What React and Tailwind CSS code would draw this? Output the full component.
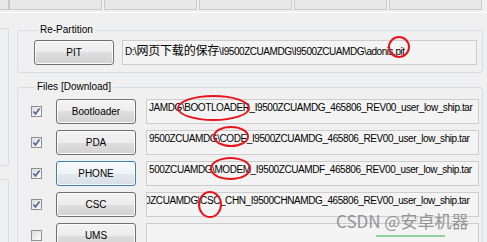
import React from 'react';

const FONT = "font-['Liberation_Sans','Noto_Sans_CJK_SC',sans-serif]";

const files = [
  { name: 'Bootloader', checked: true, path: 'JAMDG\\BOOTLOADER_I9500ZCUAMDG_465806_REV00_user_low_ship.tar' },
  { name: 'PDA', checked: true, path: '9500ZCUAMDG\\CODE_I9500ZCUAMDG_465806_REV00_user_low_ship.tar' },
  { name: 'PHONE', checked: true, focused: true, path: '500ZCUAMDG\\MODEM_I9500ZCUAMDF_465806_REV00_user_low_ship.tar' },
  { name: 'CSC', checked: true, path: '0ZCUAMDG\\CSC_CHN_I9500CHNAMDG_465806_REV00_user_low_ship.tar', shift: true },
  { name: 'UMS', checked: false, path: '' },
];

// red marker ellipses drawn over the screenshot
const marks = [
  { left: 388, top: 36, w: 22, h: 22 },
  { left: 177, top: 95, w: 73, h: 26 },
  { left: 213, top: 126, w: 36, h: 21 },
  { left: 210, top: 157, w: 41, h: 23 },
  { left: 198, top: 191, w: 24, h: 27 },
];

const Button = ({ label, focused }) => (
  <div
    className={`w-[80px] h-[25px] shrink-0 flex items-center justify-center rounded-[3px] border text-[10px] ${
      focused
        ? 'border-[#3c7fb1] bg-[linear-gradient(to_bottom,#f7fafc_0%,#eef3f6_50%,#e2e9ee_50%,#d7e0e7_100%)]'
        : 'border-[#707070] bg-[linear-gradient(to_bottom,#f4f4f4_0%,#ececec_50%,#dedede_50%,#d2d2d2_100%)]'
    } shadow-[inset_0_0_0_1px_#fbfbfb]`}
  >
    {label}
  </div>
);

const Checkbox = ({ checked }) => (
  <div className="w-[11px] h-[11px] shrink-0 border border-[#8e8f8f] bg-[linear-gradient(to_bottom_right,#dcdcdc,#fdfdfd)] flex items-center justify-center">
    {checked && (
      <svg width="9" height="9" viewBox="0 0 9 9">
        <path d="M1.5 4.5 L3.5 7 L7.5 1.5" fill="none" stroke="#4b61a0" strokeWidth="1.6" />
      </svg>
    )}
  </div>
);

export default function App() {
  return (
    <div className={`relative w-[487px] h-[242px] overflow-hidden bg-[#f0f0f0] text-black ${FONT}`}>
      {/* top strip */}
      <div className="flex h-[10px]">
        <div className="w-[9px] border-r border-b border-[#c9c9c9] bg-[#e8e8e8]" />
        <div className="w-[93px] border border-t-0 border-[#c9c9c9] bg-[#e8e8e8]" />
        <div className="ml-[2px] w-[93px] border border-t-0 border-[#c9c9c9] bg-[#e8e8e8]" />
        <div className="ml-[2px] w-[93px] border border-t-0 border-[#c9c9c9] bg-[#e8e8e8]" />
        <div className="ml-[2px] w-[93px] border border-t-0 border-[#c9c9c9] bg-[#e8e8e8]" />
        <div className="ml-[2px] w-[93px] border border-t-0 border-[#c9c9c9] bg-[#e8e8e8]" />
      </div>
      <div className="h-[3px] border-b border-white" />

      <div className="flex">
        {/* left column, cut off */}
        <div className="w-[9px] shrink-0">
          <div className="mt-[15px] h-[138px] border-y border-r border-[#d5dfe5] rounded-r-[3px]" />
          <div className="mt-[13px] h-[80px] border-t border-r border-[#d5dfe5] rounded-tr-[3px]" />
        </div>

        <div className="ml-[8px] w-[466px]">
          {/* Re-Partition */}
          <fieldset className="mt-[11px] border border-[#d5dfe5] rounded-[3px] pl-[16px] pr-[5px] pt-[4px] pb-[7px]">
            <legend className="ml-[4px] px-[2px] text-[10px] leading-[12px]">Re-Partition</legend>
            <div className="flex gap-[8px]">
              <Button label="PIT" />
              <div className="flex-1 h-[25px] border border-[#cdcdcd] bg-[#f4f4f4] px-[2px] pt-[3px] text-[10px] leading-[12px] tracking-[-0.45px] whitespace-nowrap overflow-hidden">
                D:\<span className="text-[12px] tracking-[-0.2px] font-['Noto_Sans_CJK_SC',sans-serif]">网页下载的保存</span>\I9500ZCUAMDG\I9500ZCUAMDG\adonis.pit
              </div>
            </div>
          </fieldset>

          {/* Files [Download] */}
          <fieldset className="mt-[8px] border border-[#d5dfe5] rounded-[3px] pl-[13px] pr-[3px] pt-[6px] pb-[20px]">
            <legend className="ml-[4px] px-[2px] text-[10px] leading-[12px]">Files [Download]</legend>
            <div className="flex flex-col gap-[6px]">
              {files.map((f) => (
                <div key={f.name} className="flex items-center h-[25px]">
                  <Checkbox checked={f.checked} />
                  <div className="ml-[14px]">
                    <Button label={f.name} focused={f.focused} />
                  </div>
                  <div className="ml-[10px] flex-1 h-[25px] border border-[#cdcdcd] bg-[#f4f4f4] pl-[2px] pt-[2px] text-[10px] leading-[12px] tracking-[-0.42px] whitespace-nowrap overflow-hidden">
                    <span className={f.shift ? 'ml-[-4px]' : ''}>{f.path}</span>
                  </div>
                </div>
              ))}
            </div>
          </fieldset>
        </div>
      </div>

      {/* annotation marks */}
      {marks.map((m, i) => (
        <div
          key={i}
          className="absolute rounded-[50%] border-2 border-[#e8141b]"
          style={{ left: m.left, top: m.top, width: m.w, height: m.h }}
        />
      ))}

      {/* watermark */}
      <div className="absolute left-[336px] top-[210px] text-[17px] leading-[22px] text-[#8c8c8c] opacity-90 font-['Noto_Sans_CJK_SC',sans-serif] whitespace-nowrap">
        CSDN @安卓机器
      </div>
      <div className="absolute left-[376px] top-[235px] w-[69px] h-[2px] bg-[#8fd19e]" />
    </div>
  );
}
